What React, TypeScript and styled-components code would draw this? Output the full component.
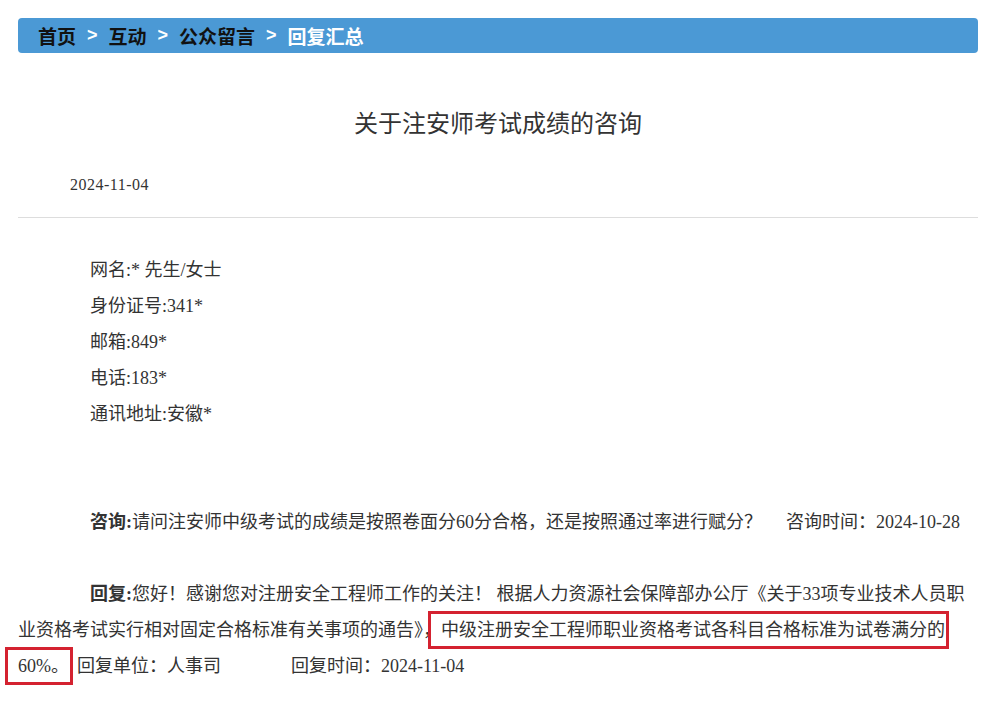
import styled, { createGlobalStyle } from 'styled-components';

const GlobalStyle = createGlobalStyle`
  html, body {
    margin: 0;
    padding: 0;
    background: #fff;
  }
`;

const Page = styled.div`
  padding: 18px 6px 18px 18px;
  width: 960px;
  color: #333;
  font-family: "Liberation Serif", "Noto Sans CJK SC", serif;
`;

const Crumbs = styled.nav`
  display: flex;
  align-items: center;
  height: 35px;
  padding-left: 20px;
  background-color: #4b99d5;
  border-radius: 4px;
  font-family: "Noto Sans CJK SC", sans-serif;
  font-size: 19px;
  font-weight: 700;
  color: #111;
`;

const Crumb = styled.span<{ $current?: boolean }>`
  color: ${(p) => (p.$current ? '#fff' : '#111')};
`;

const Sep = styled.span`
  margin: 0 11px;
  color: #fff;
  font-family: "Liberation Sans", sans-serif;
  font-size: 18px;
`;

const Title = styled.h1`
  margin: 51px 0 0;
  line-height: 36px;
  text-align: center;
  font-family: "Noto Sans CJK SC", sans-serif;
  font-size: 24px;
  font-weight: 400;
  color: #333;
`;

const PubDate = styled.div`
  margin-top: 33px;
  padding-left: 52px;
  line-height: 24px;
  font-size: 16px;
  letter-spacing: 0.5px;
`;

const Rule = styled.hr`
  margin: 20px 0 0;
  border: 0;
  border-top: 1px solid #ddd;
`;

const Info = styled.div`
  margin-top: 34px;
  padding-left: 72px;
  font-size: 18px;
  line-height: 36px;
`;

const Para = styled.p<{ $gap: number }>`
  margin: ${(p) => p.$gap}px 0 0;
  text-indent: 72px;
  font-size: 18px;
  line-height: 36px;
`;

const Label = styled.b`
  font-weight: 700;
`;

const Aside = styled.span<{ $gap: number }>`
  margin-left: ${(p) => p.$gap}px;
`;

// annotation frame drawn round the key sentence, one box per line
const Marked = styled.span`
  margin: 0 4px 0 -13px;
  padding: 6px 1px 6px 10px;
  border: 3px solid #d42230;
  -webkit-box-decoration-break: clone;
  box-decoration-break: clone;
`;

const info = ['网名:* 先生/女士', '身份证号:341*', '邮箱:849*', '电话:183*', '通讯地址:安徽*'];

export default function App() {
  return (
    <>
      <GlobalStyle />
      <Page>
        <Crumbs>
          <Crumb>首页</Crumb>
          <Sep>&gt;</Sep>
          <Crumb>互动</Crumb>
          <Sep>&gt;</Sep>
          <Crumb>公众留言</Crumb>
          <Sep>&gt;</Sep>
          <Crumb $current>回复汇总</Crumb>
        </Crumbs>
        <Title>关于注安师考试成绩的咨询</Title>
        <PubDate>2024-11-04</PubDate>
        <Rule />
        <Info>
          {info.map((row) => (
            <div key={row}>{row}</div>
          ))}
        </Info>
        <Para $gap={72}>
          <Label>咨询:</Label>请问注安师中级考试的成绩是按照卷面分60分合格，还是按照通过率进行赋分？
          <Aside $gap={24}>咨询时间：2024-10-28</Aside>
        </Para>
        <Para $gap={36}>
          <Label>回复:</Label>您好！感谢您对注册安全工程师工作的关注！ 根据人力资源社会保障部办公厅《关于33项专业技术人员职业资格考试实行相对固定合格标准有关事项的通告》，
          <Marked>中级注册安全工程师职业资格考试各科目合格标准为试卷满分的60%。</Marked>回复单位：人事司
          <Aside $gap={70}>回复时间：2024-11-04</Aside>
        </Para>
      </Page>
    </>
  );
}
